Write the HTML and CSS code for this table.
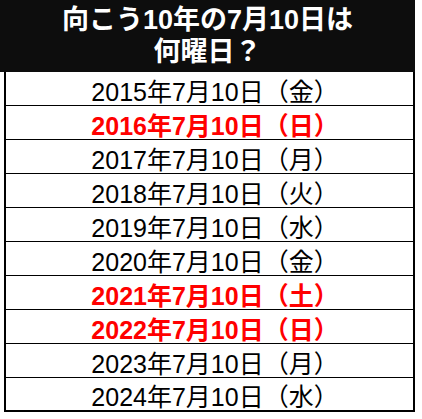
FILE: index.html
```html
<!DOCTYPE html>
<html lang="ja">
<head>
<meta charset="utf-8">
<link rel="stylesheet" href="styles.css">
</head>
<body>
<div class="sheet">
  <div class="head">
    <div class="head-line">向こう10年の7月10日は</div>
    <div class="head-line">何曜日？</div>
  </div>
  <div class="rows">
    <div class="row">2015年7月10日（金）</div>
    <div class="row red">2016年7月10日（日）</div>
    <div class="row">2017年7月10日（月）</div>
    <div class="row">2018年7月10日（火）</div>
    <div class="row">2019年7月10日（水）</div>
    <div class="row">2020年7月10日（金）</div>
    <div class="row red">2021年7月10日（土）</div>
    <div class="row red">2022年7月10日（日）</div>
    <div class="row">2023年7月10日（月）</div>
    <div class="row last">2024年7月10日（水）</div>
  </div>
</div>
</body>
</html>
```
FILE: styles.css
```css
html, body {
  margin: 0;
  padding: 0;
  background: #ffffff;
}
.sheet {
  width: 415px;
  display: flex;
  flex-direction: column;
}
.head {
  background: #0d0d0d;
  height: 72px;
  box-sizing: border-box;
  padding-top: 4px;
  display: flex;
  flex-direction: column;
  align-items: center;
  color: #ffffff;
  font-family: "Liberation Sans", "Noto Sans CJK JP", sans-serif;
  font-weight: bold;
  font-size: 27px;
}
.head-line {
  height: 32px;
  line-height: 32px;
  white-space: nowrap;
}
.rows {
  margin-left: 4px;
  border-left: 2px solid #000;
  border-right: 2px solid #000;
  display: flex;
  flex-direction: column;
}
.row {
  height: 34px;
  box-sizing: border-box;
  border-bottom: 1px solid #000;
  padding-top: 2px;
  padding-left: 11px;
  display: flex;
  align-items: center;
  justify-content: center;
  font-family: "Liberation Sans Narrow", "Liberation Sans", "Noto Sans CJK JP", sans-serif;
  font-size: 25px;
  color: #000;
  white-space: nowrap;
}
.row.red {
  color: #ff0000;
  font-weight: bold;
}
.row.last {
  border-bottom: 2px solid #000;
}
```
